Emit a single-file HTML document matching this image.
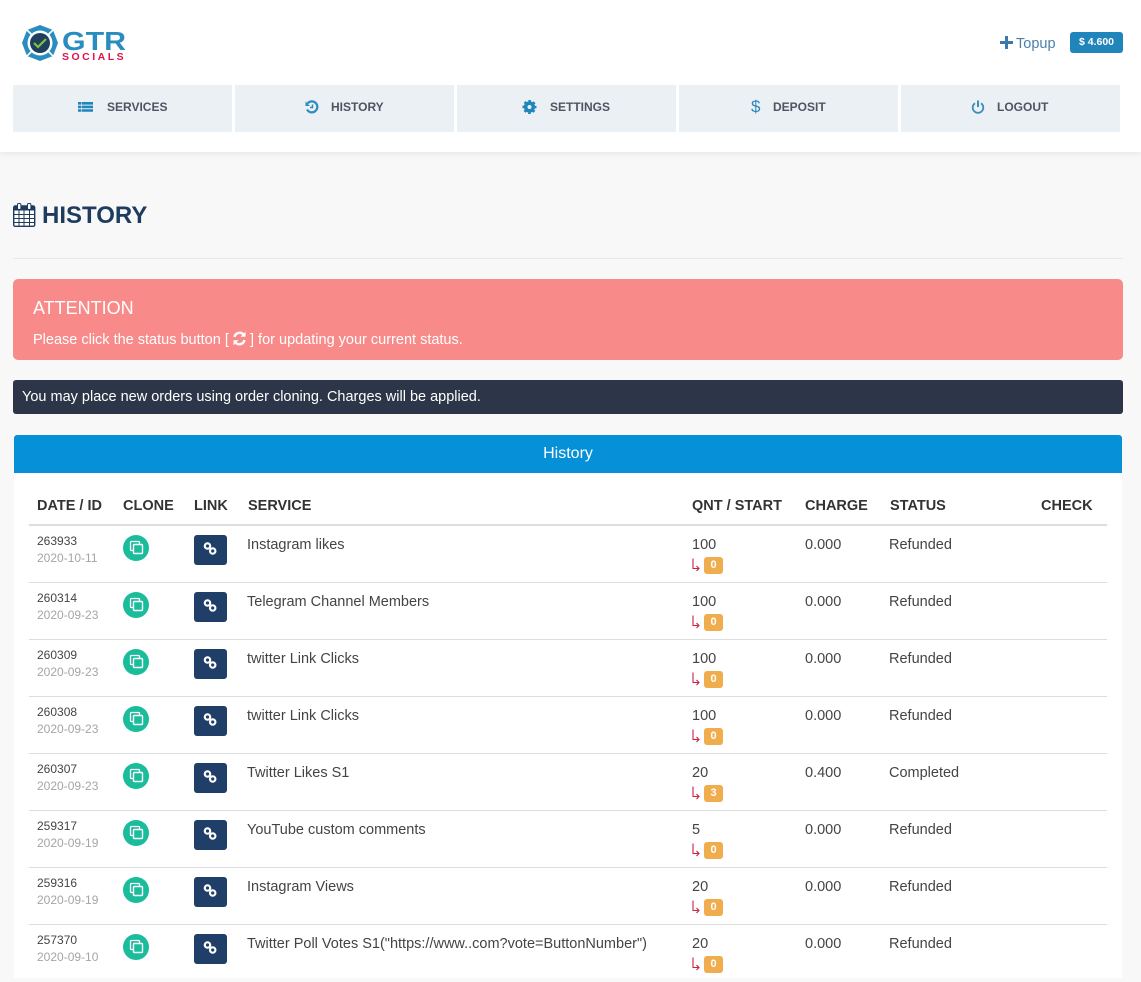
<!DOCTYPE html>
<html><head><meta charset="utf-8"><style>
*{box-sizing:border-box}
html,body{margin:0;padding:0}
body{width:1141px;height:978px;overflow:hidden;position:relative;background:#f9f8f9;font-family:"Liberation Sans",sans-serif;color:#333}
.a{position:absolute;white-space:nowrap}
#hd{left:0;top:0;width:1141px;height:152px;background:#fff;box-shadow:0 1px 8px rgba(0,0,0,.09)}
.nav{top:85px;height:47px;width:219px;background:#ebf0f5}
.nt{top:100px;font-size:12px;font-weight:bold;color:#4d5560;line-height:15px}
.ni{top:99px;width:16px;height:16px}
.th{top:498px;font-size:14.5px;font-weight:bold;color:#333;line-height:17px}
.row{left:0;width:1141px;height:57px;position:absolute}
.id{left:37px;top:7px;font-size:12px;line-height:17px;color:#444}
.dt{left:37px;top:24px;font-size:12px;line-height:17px;color:#a5a5a5}
.c{left:123px;top:9px;width:26px;height:26px;border-radius:50%;background:#1abc9c}
.l{left:194px;top:9px;width:33px;height:30px;border-radius:3px;background:#203f68}
.t{top:11px;font-size:14.5px;line-height:17px;color:#444}
.ar{left:691px;top:31px}
.b{left:704px;top:31px;width:19px;height:17px;border-radius:3px;background:#f0ad4e;color:#fff;font-size:11px;font-weight:bold;line-height:17px;text-align:center}
.ln{left:29px;top:56px;width:1078px;height:1px;background:#ddd}
</style></head><body>
<div class="a" id="hd"></div>

<!-- logo -->
<svg class="a" style="left:21px;top:24px" width="108" height="38" viewBox="0 0 108 38">
<polygon points="19,1 32,6 37,19 32,32 19,37 6,32 1,19 6,6" fill="#2a8dc0"/>
<path d="M6 6l7 7M32 6l-7 7M6 32l7-7M32 32l-7-7" stroke="#fff" stroke-width="1.600"/>
<circle cx="19" cy="19" r="12.500" fill="#fff"/>
<circle cx="19" cy="19" r="10" fill="#1f3f5f"/>
<path d="M13 19l4 4 8-8" fill="none" stroke="#7fc241" stroke-width="2.200"/>
<text x="41" y="26" font-family="Liberation Sans" font-weight="bold" font-size="26" fill="#2a8dc0" textLength="64" lengthAdjust="spacingAndGlyphs">GTR</text>
<text x="41" y="36" font-family="Liberation Sans" font-weight="bold" font-size="10.500" fill="#e0134f" letter-spacing="2.500">SOCIALS</text>
</svg>

<!-- topup -->
<svg class="a" style="left:1000px;top:36px" width="13" height="13" viewBox="0 0 13 13"><path d="M5 0h3v5h5v3H8v5H5V8H0V5h5z" fill="#3d78ab"/></svg>
<div class="a" style="left:1016px;top:35px;font-size:14.500px;line-height:18px;color:#4a7fae">Topup</div>
<div class="a" style="left:1070px;top:32px;width:53px;height:21px;border-radius:3px;background:#1f85bb;color:#fff;font-size:10.500px;font-weight:bold;line-height:21px;text-align:center">$ 4.600</div>

<!-- nav -->
<div class="a nav" style="left:13px"></div>
<div class="a nav" style="left:235px"></div>
<div class="a nav" style="left:457px"></div>
<div class="a nav" style="left:679px"></div>
<div class="a nav" style="left:901px"></div>

<svg class="a ni" style="left:78px" viewBox="0 0 16 16"><path d="M0 3h3v2.600H0zM3.600 3H15v2.600H3.600zM0 6.600h3v2.600H0zM3.600 6.600H15v2.600H3.600zM0 10.200h3v2.600H0zM3.600 10.200H15v2.600H3.600z" fill="#1f85bb"/></svg>
<div class="a nt" style="left:107px">SERVICES</div>
<svg class="a ni" style="left:304px" viewBox="0 0 16 16"><path d="M3.500 4.500A5.500 5.500 0 1 1 3 10.500" fill="none" stroke="#2e8cc0" stroke-width="2.200"/><path d="M1.500 2.500v4.500h4.500z" fill="#2e8cc0"/><path d="M8.500 5.500v3H6" fill="none" stroke="#2e8cc0" stroke-width="1.500"/></svg>
<div class="a nt" style="left:331px">HISTORY</div>
<svg class="a ni" style="left:522px" viewBox="0 0 16 16"><circle cx="7.500" cy="8" r="3.800" fill="none" stroke="#1f85bb" stroke-width="3.600"/><circle cx="7.500" cy="8" r="6" fill="none" stroke="#1f85bb" stroke-width="2" stroke-dasharray="2.600 2.110" stroke-dashoffset="1.300"/></svg>
<div class="a nt" style="left:550px">SETTINGS</div>
<div class="a" style="left:751px;top:97px;font-size:17px;line-height:20px;color:#2f86b6">$</div>
<div class="a nt" style="left:773px">DEPOSIT</div>
<svg class="a ni" style="left:970px" viewBox="0 0 16 16"><path d="M5 4.200a5.300 5.300 0 1 0 6 0" fill="none" stroke="#3d8dba" stroke-width="1.800"/><path d="M8 1.500v6.500" stroke="#3d8dba" stroke-width="2"/></svg>
<div class="a nt" style="left:997px">LOGOUT</div>

<!-- title -->
<svg class="a" style="left:13px;top:203px" width="23" height="24" viewBox="0 0 23 24"><rect x=".7" y="3" width="21" height="20.300" rx="1.500" fill="#fff" stroke="#1d3c5e" stroke-width="1.400"/><rect x="1" y="3" width="20.500" height="4.500" fill="#1d3c5e"/><path d="M1 11.500h21M1 15.500h21M1 19.500h21M6 7v16M11 7v16M16.500 7v16" stroke="#1d3c5e" stroke-width="1"/><rect x="4.500" y="0.500" width="3.400" height="6" rx="1.200" fill="#fff" stroke="#1d3c5e"/><rect x="14.500" y="0.500" width="3.400" height="6" rx="1.200" fill="#fff" stroke="#1d3c5e"/></svg>
<div class="a" style="left:42px;top:201px;font-size:24px;font-weight:bold;line-height:30px;color:#1d3c5e">HISTORY</div>
<div class="a" style="left:13px;top:258px;width:1110px;height:1px;background:#e8e8e8"></div>

<!-- attention -->
<div class="a" style="left:13px;top:279px;width:1110px;height:81px;border-radius:5px;background:#f98a8a"></div>
<div class="a" style="left:33px;top:298px;font-size:18px;line-height:21px;color:#fff">ATTENTION</div>
<div class="a" style="left:33px;top:331px;font-size:14.500px;line-height:18px;color:#fff">Please click the status button [</div>
<svg class="a" style="left:232px;top:331px" width="15" height="15" viewBox="0 0 15 15"><path d="M2.500 6A5.200 5.200 0 0 1 11.500 3.500M12.500 9A5.200 5.200 0 0 1 3.500 11.500" fill="none" stroke="#fff" stroke-width="2.400"/><path d="M13.500 .8v5h-5zM1.500 14.200v-5h5z" fill="#fff"/></svg>
<div class="a" style="left:250px;top:331px;font-size:14.500px;line-height:18px;color:#fff">] for updating your current status.</div>

<div class="a" style="left:13px;top:380px;width:1110px;height:34px;border-radius:3px;background:#2c3648"></div>
<div class="a" style="left:22px;top:388px;font-size:14.500px;line-height:18px;color:#fff">You may place new orders using order cloning. Charges will be applied.</div>

<!-- panel -->
<div class="a" style="left:14px;top:435px;width:1108px;height:543px;background:#fff"></div>
<div class="a" style="left:14px;top:435px;width:1108px;height:38px;background:#0590d8;border-radius:3px 3px 0 0;color:#fff;font-size:16px;line-height:37px;text-align:center">History</div>

<div class="a th" style="left:37px">DATE / ID</div>
<div class="a th" style="left:123px">CLONE</div>
<div class="a th" style="left:194px">LINK</div>
<div class="a th" style="left:248px">SERVICE</div>
<div class="a th" style="left:692px">QNT / START</div>
<div class="a th" style="left:805px">CHARGE</div>
<div class="a th" style="left:890px">STATUS</div>
<div class="a th" style="left:1041px">CHECK</div>
<div class="a" style="left:29px;top:524px;width:1078px;height:2px;background:#ddd"></div>

<div class="row" style="top:526px"><div class="a id">263933</div><div class="a dt">2020-10-11</div><div class="a c"><svg width="26" height="26" viewBox="0 0 26 26"><rect x="7.500" y="6.500" width="9" height="9" rx="1" fill="none" stroke="#fff" stroke-width="1.300"/><rect x="10.500" y="9.500" width="9" height="9" rx="1" fill="#1abc9c" stroke="#fff" stroke-width="1.400"/></svg></div><div class="a l"><svg width="33" height="30" viewBox="0 0 33 30"><circle cx="13.500" cy="11" r="2.700" fill="none" stroke="#fff" stroke-width="2.200"/><circle cx="18.700" cy="16" r="2.700" fill="none" stroke="#fff" stroke-width="2.200"/></svg></div><div class="a t" style="left:247px">Instagram likes</div><div class="a t" style="left:692px">100</div><svg class="a ar" width="10" height="16" viewBox="0 0 10 16"><path d="M2 1.500v10h6M5.500 9L8 11.500 5.500 14" fill="none" stroke="#cc2040" stroke-width="1.100"/></svg><div class="a b">0</div><div class="a t" style="left:805px">0.000</div><div class="a t" style="left:889px">Refunded</div><div class="a ln"></div></div>

<div class="row" style="top:583px"><div class="a id">260314</div><div class="a dt">2020-09-23</div><div class="a c"><svg width="26" height="26" viewBox="0 0 26 26"><rect x="7.500" y="6.500" width="9" height="9" rx="1" fill="none" stroke="#fff" stroke-width="1.300"/><rect x="10.500" y="9.500" width="9" height="9" rx="1" fill="#1abc9c" stroke="#fff" stroke-width="1.400"/></svg></div><div class="a l"><svg width="33" height="30" viewBox="0 0 33 30"><circle cx="13.500" cy="11" r="2.700" fill="none" stroke="#fff" stroke-width="2.200"/><circle cx="18.700" cy="16" r="2.700" fill="none" stroke="#fff" stroke-width="2.200"/></svg></div><div class="a t" style="left:247px">Telegram Channel Members</div><div class="a t" style="left:692px">100</div><svg class="a ar" width="10" height="16" viewBox="0 0 10 16"><path d="M2 1.500v10h6M5.500 9L8 11.500 5.500 14" fill="none" stroke="#cc2040" stroke-width="1.100"/></svg><div class="a b">0</div><div class="a t" style="left:805px">0.000</div><div class="a t" style="left:889px">Refunded</div><div class="a ln"></div></div>

<div class="row" style="top:640px"><div class="a id">260309</div><div class="a dt">2020-09-23</div><div class="a c"><svg width="26" height="26" viewBox="0 0 26 26"><rect x="7.500" y="6.500" width="9" height="9" rx="1" fill="none" stroke="#fff" stroke-width="1.300"/><rect x="10.500" y="9.500" width="9" height="9" rx="1" fill="#1abc9c" stroke="#fff" stroke-width="1.400"/></svg></div><div class="a l"><svg width="33" height="30" viewBox="0 0 33 30"><circle cx="13.500" cy="11" r="2.700" fill="none" stroke="#fff" stroke-width="2.200"/><circle cx="18.700" cy="16" r="2.700" fill="none" stroke="#fff" stroke-width="2.200"/></svg></div><div class="a t" style="left:247px">twitter Link Clicks</div><div class="a t" style="left:692px">100</div><svg class="a ar" width="10" height="16" viewBox="0 0 10 16"><path d="M2 1.500v10h6M5.500 9L8 11.500 5.500 14" fill="none" stroke="#cc2040" stroke-width="1.100"/></svg><div class="a b">0</div><div class="a t" style="left:805px">0.000</div><div class="a t" style="left:889px">Refunded</div><div class="a ln"></div></div>

<div class="row" style="top:697px"><div class="a id">260308</div><div class="a dt">2020-09-23</div><div class="a c"><svg width="26" height="26" viewBox="0 0 26 26"><rect x="7.500" y="6.500" width="9" height="9" rx="1" fill="none" stroke="#fff" stroke-width="1.300"/><rect x="10.500" y="9.500" width="9" height="9" rx="1" fill="#1abc9c" stroke="#fff" stroke-width="1.400"/></svg></div><div class="a l"><svg width="33" height="30" viewBox="0 0 33 30"><circle cx="13.500" cy="11" r="2.700" fill="none" stroke="#fff" stroke-width="2.200"/><circle cx="18.700" cy="16" r="2.700" fill="none" stroke="#fff" stroke-width="2.200"/></svg></div><div class="a t" style="left:247px">twitter Link Clicks</div><div class="a t" style="left:692px">100</div><svg class="a ar" width="10" height="16" viewBox="0 0 10 16"><path d="M2 1.500v10h6M5.500 9L8 11.500 5.500 14" fill="none" stroke="#cc2040" stroke-width="1.100"/></svg><div class="a b">0</div><div class="a t" style="left:805px">0.000</div><div class="a t" style="left:889px">Refunded</div><div class="a ln"></div></div>

<div class="row" style="top:754px"><div class="a id">260307</div><div class="a dt">2020-09-23</div><div class="a c"><svg width="26" height="26" viewBox="0 0 26 26"><rect x="7.500" y="6.500" width="9" height="9" rx="1" fill="none" stroke="#fff" stroke-width="1.300"/><rect x="10.500" y="9.500" width="9" height="9" rx="1" fill="#1abc9c" stroke="#fff" stroke-width="1.400"/></svg></div><div class="a l"><svg width="33" height="30" viewBox="0 0 33 30"><circle cx="13.500" cy="11" r="2.700" fill="none" stroke="#fff" stroke-width="2.200"/><circle cx="18.700" cy="16" r="2.700" fill="none" stroke="#fff" stroke-width="2.200"/></svg></div><div class="a t" style="left:247px">Twitter Likes S1</div><div class="a t" style="left:692px">20</div><svg class="a ar" width="10" height="16" viewBox="0 0 10 16"><path d="M2 1.500v10h6M5.500 9L8 11.500 5.500 14" fill="none" stroke="#cc2040" stroke-width="1.100"/></svg><div class="a b">3</div><div class="a t" style="left:805px">0.400</div><div class="a t" style="left:889px">Completed</div><div class="a ln"></div></div>

<div class="row" style="top:811px"><div class="a id">259317</div><div class="a dt">2020-09-19</div><div class="a c"><svg width="26" height="26" viewBox="0 0 26 26"><rect x="7.500" y="6.500" width="9" height="9" rx="1" fill="none" stroke="#fff" stroke-width="1.300"/><rect x="10.500" y="9.500" width="9" height="9" rx="1" fill="#1abc9c" stroke="#fff" stroke-width="1.400"/></svg></div><div class="a l"><svg width="33" height="30" viewBox="0 0 33 30"><circle cx="13.500" cy="11" r="2.700" fill="none" stroke="#fff" stroke-width="2.200"/><circle cx="18.700" cy="16" r="2.700" fill="none" stroke="#fff" stroke-width="2.200"/></svg></div><div class="a t" style="left:247px">YouTube custom comments</div><div class="a t" style="left:692px">5</div><svg class="a ar" width="10" height="16" viewBox="0 0 10 16"><path d="M2 1.500v10h6M5.500 9L8 11.500 5.500 14" fill="none" stroke="#cc2040" stroke-width="1.100"/></svg><div class="a b">0</div><div class="a t" style="left:805px">0.000</div><div class="a t" style="left:889px">Refunded</div><div class="a ln"></div></div>

<div class="row" style="top:868px"><div class="a id">259316</div><div class="a dt">2020-09-19</div><div class="a c"><svg width="26" height="26" viewBox="0 0 26 26"><rect x="7.500" y="6.500" width="9" height="9" rx="1" fill="none" stroke="#fff" stroke-width="1.300"/><rect x="10.500" y="9.500" width="9" height="9" rx="1" fill="#1abc9c" stroke="#fff" stroke-width="1.400"/></svg></div><div class="a l"><svg width="33" height="30" viewBox="0 0 33 30"><circle cx="13.500" cy="11" r="2.700" fill="none" stroke="#fff" stroke-width="2.200"/><circle cx="18.700" cy="16" r="2.700" fill="none" stroke="#fff" stroke-width="2.200"/></svg></div><div class="a t" style="left:247px">Instagram Views</div><div class="a t" style="left:692px">20</div><svg class="a ar" width="10" height="16" viewBox="0 0 10 16"><path d="M2 1.500v10h6M5.500 9L8 11.500 5.500 14" fill="none" stroke="#cc2040" stroke-width="1.100"/></svg><div class="a b">0</div><div class="a t" style="left:805px">0.000</div><div class="a t" style="left:889px">Refunded</div><div class="a ln"></div></div>

<div class="row" style="top:925px"><div class="a id">257370</div><div class="a dt">2020-09-10</div><div class="a c"><svg width="26" height="26" viewBox="0 0 26 26"><rect x="7.500" y="6.500" width="9" height="9" rx="1" fill="none" stroke="#fff" stroke-width="1.300"/><rect x="10.500" y="9.500" width="9" height="9" rx="1" fill="#1abc9c" stroke="#fff" stroke-width="1.400"/></svg></div><div class="a l"><svg width="33" height="30" viewBox="0 0 33 30"><circle cx="13.500" cy="11" r="2.700" fill="none" stroke="#fff" stroke-width="2.200"/><circle cx="18.700" cy="16" r="2.700" fill="none" stroke="#fff" stroke-width="2.200"/></svg></div><div class="a t" style="left:247px">Twitter Poll Votes S1("https://www..com?vote=ButtonNumber")</div><div class="a t" style="left:692px">20</div><svg class="a ar" width="10" height="16" viewBox="0 0 10 16"><path d="M2 1.500v10h6M5.500 9L8 11.500 5.500 14" fill="none" stroke="#cc2040" stroke-width="1.100"/></svg><div class="a b">0</div><div class="a t" style="left:805px">0.000</div><div class="a t" style="left:889px">Refunded</div></div>
</body></html>
